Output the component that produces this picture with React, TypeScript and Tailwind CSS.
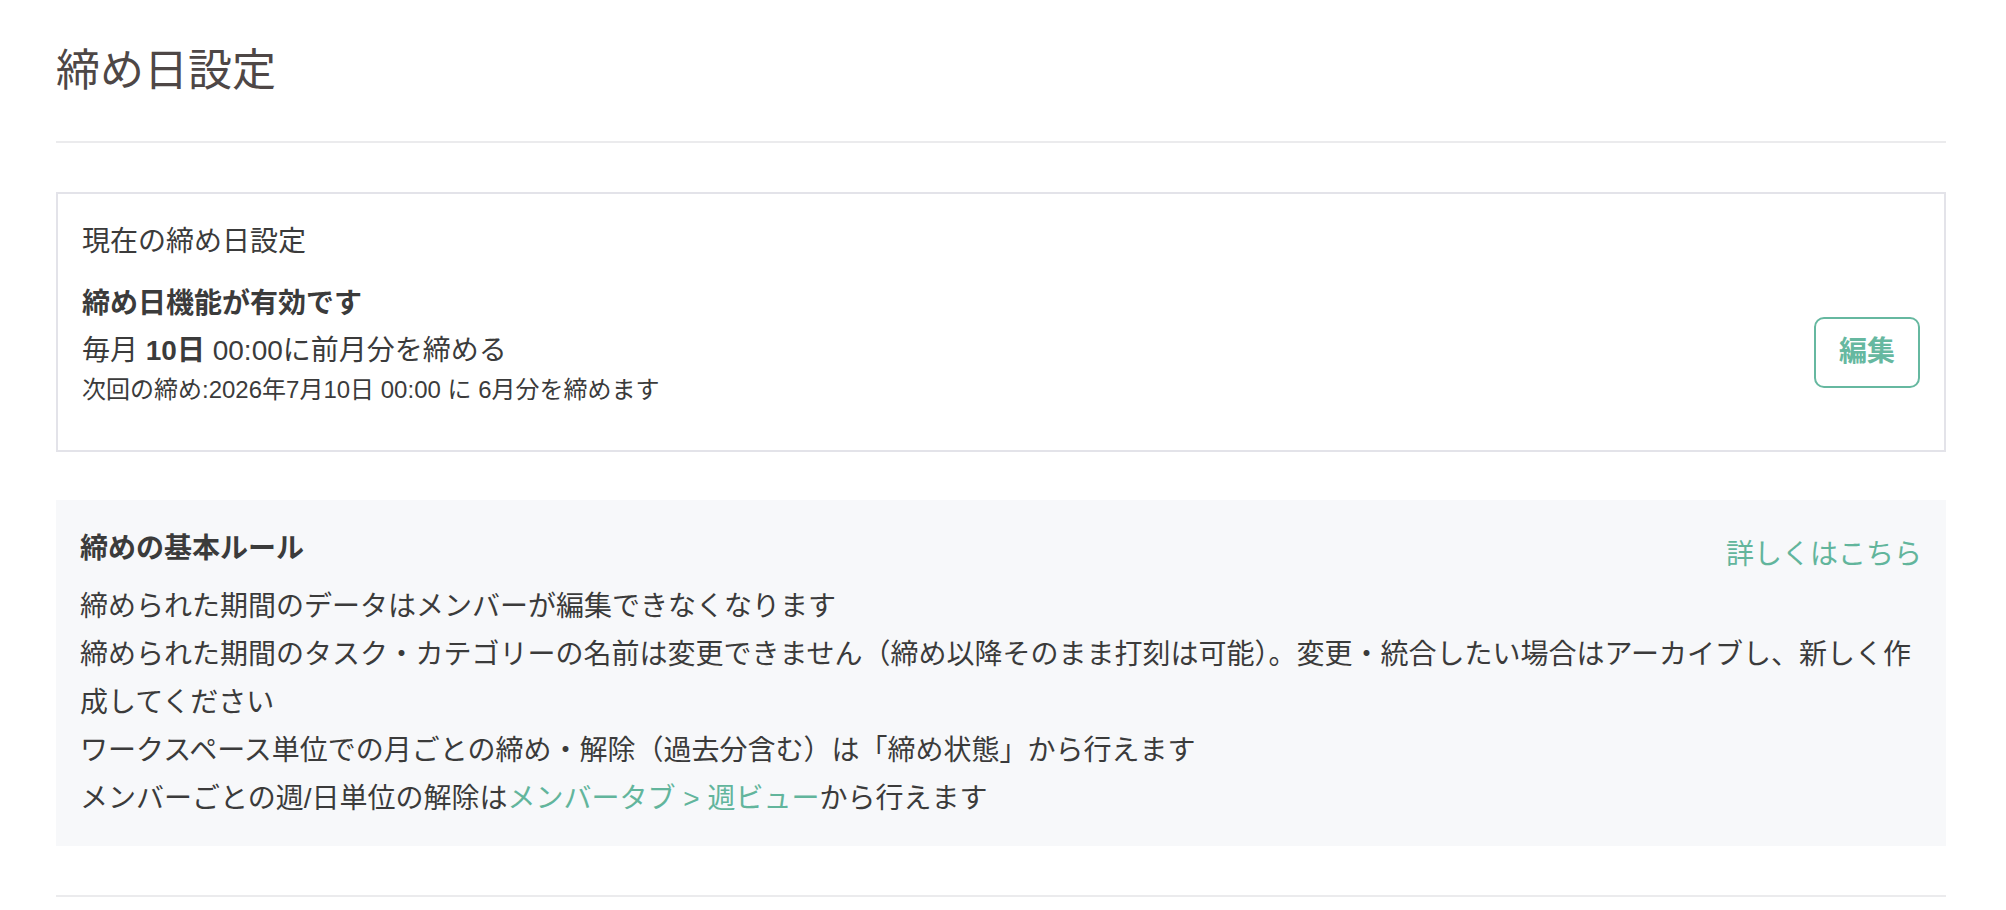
import React from 'react';

const rules = [
  '締められた期間のデータはメンバーが編集できなくなります',
  '締められた期間のタスク・カテゴリーの名前は変更できません（締め以降そのまま打刻は可能）。変更・統合したい場合はアーカイブし、新しく作成してください',
  'ワークスペース単位での月ごとの締め・解除（過去分含む）は「締め状態」から行えます',
];

export default function App() {
  return (
    <div
      className="min-h-screen bg-white pl-[56px] pr-[60px] text-[#3b3b3b]"
      style={{ fontFamily: '"Liberation Sans", "Noto Sans CJK JP", sans-serif' }}
    >
      {/* Page title */}
      <header className="h-[143px] flex items-center border-b-2 border-[#ebebed]">
        <h1 className="text-[44px] font-normal text-[#4e4746] leading-none">締め日設定</h1>
      </header>

      {/* Current setting card */}
      <section className="mt-[49px] h-[260px] border-2 border-[#e3e3e9] px-[24px] pt-[24px]">
        <p className="text-[28px] leading-[48px]">現在の締め日設定</p>
        <div className="mt-[16px] flex items-center justify-between">
          <div>
            <p className="text-[28px] leading-[44px] font-bold">締め日機能が有効です</p>
            <p className="mt-[3px] text-[28px] leading-[44px]">
              毎月 <span className="font-bold">10日</span> 00:00に前月分を締める
            </p>
            <p className="-mt-px text-[24px] leading-[36px]">次回の締め:2026年7月10日 00:00 に 6月分を締めます</p>
          </div>
          <button className="mt-[14px] h-[71px] w-[106px] rounded-[10px] border-2 border-[#66b8a0] text-[28px] font-bold text-[#66b8a0] bg-white">
            編集
          </button>
        </div>
      </section>

      {/* Basic rules */}
      <section className="mt-[48px] h-[346px] bg-[#f7f8fa] px-[24px] pt-[25px]">
        <div className="h-[48px] flex items-start justify-between">
          <h2 className="text-[28px] leading-[48px] font-bold">締めの基本ルール</h2>
          <a className="mt-[6px] text-[28px] leading-[48px] text-[#62b59c] cursor-pointer">詳しくはこちら</a>
        </div>
        <div className="mt-[10px] text-[28px] leading-[48px]">
          {rules.map((r, i) => (
            <p key={i}>{r}</p>
          ))}
          <p>
            メンバーごとの週/日単位の解除は<a className="text-[#62b59c] cursor-pointer">メンバータブ &gt; 週ビュー</a>から行えます
          </p>
        </div>
      </section>

      <div className="mt-[49px] border-b-2 border-[#ebebed]" />
    </div>
  );
}
